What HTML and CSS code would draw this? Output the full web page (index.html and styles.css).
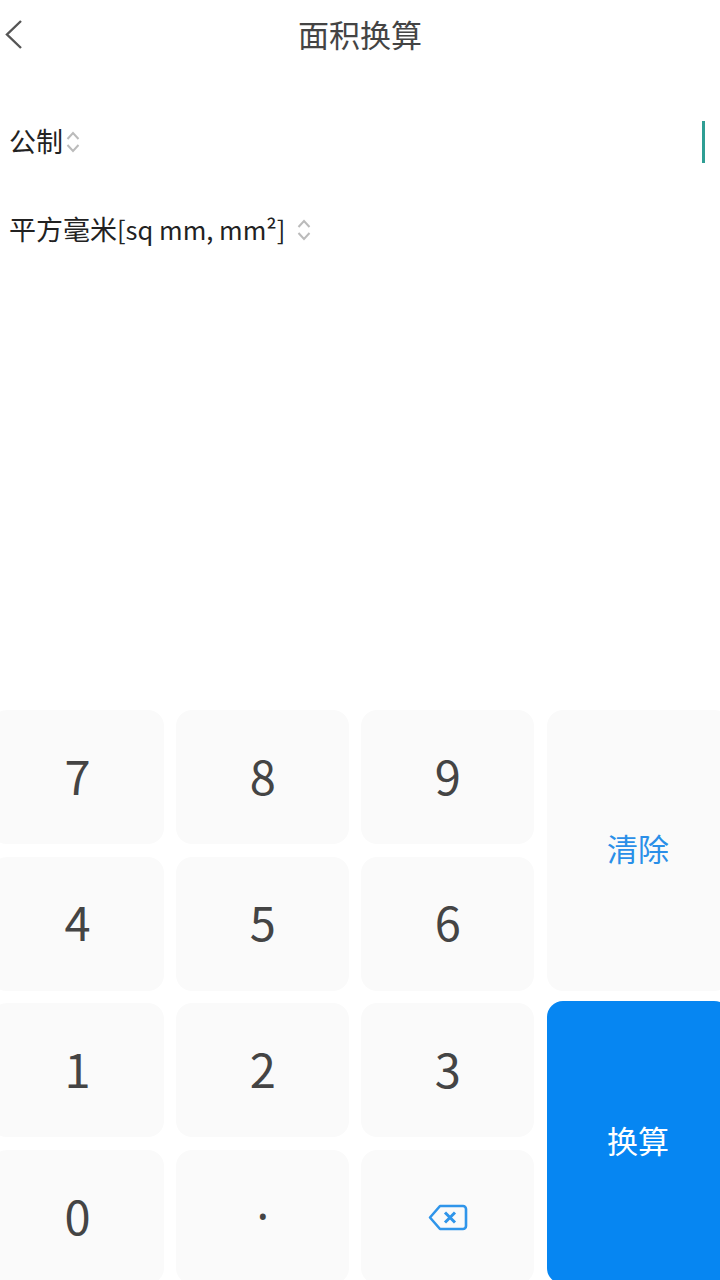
FILE: index.html
```html
<!DOCTYPE html>
<html lang="zh-CN">
<head>
  <meta charset="UTF-8">
  <title>面积换算</title>
  <link rel="stylesheet" href="styles.css">
</head>
<body>

<div class="page">
  <div class="topbar">
    <svg class="back" viewBox="0 0 20 32" width="20" height="32">
      <path d="M17 3 L3 16.5 L17 30" fill="none" stroke="#555" stroke-width="2.4"/>
    </svg>
    <div class="title">面积换算</div>
  </div>

  <div class="row row-system">
    <div class="picker">
      <span class="picker-text">公制</span>
      <svg class="updown updown-near" viewBox="0 0 16 24" width="16" height="24">
        <path d="M2.5 9 L8 3 L13.5 9 M2.5 15 L8 21 L13.5 15" fill="none" stroke="#bbb" stroke-width="2"/>
      </svg>
    </div>
    <div class="caret"></div>
  </div>

  <div class="row row-unit">
    <div class="picker">
      <span class="picker-text">平方毫米<span class="unit-code">[sq mm, mm²]</span></span>
      <svg class="updown updown-far" viewBox="0 0 16 24" width="16" height="24">
        <path d="M2.5 9 L8 3 L13.5 9 M2.5 15 L8 21 L13.5 15" fill="none" stroke="#bbb" stroke-width="2"/>
      </svg>
    </div>
  </div>

  <div class="keypad">
    <div class="key">7</div>
    <div class="key">8</div>
    <div class="key">9</div>
    <div class="key key-clear">清除</div>
    <div class="key">4</div>
    <div class="key">5</div>
    <div class="key">6</div>
    <div class="key">1</div>
    <div class="key">2</div>
    <div class="key">3</div>
    <div class="key key-convert">换算</div>
    <div class="key">0</div>
    <div class="key key-dot">·</div>
    <div class="key key-icon">
      <svg viewBox="0 0 40 28" width="40" height="28">
        <path d="M12 3 H35 a3 3 0 0 1 3 3 V23 a3 3 0 0 1 -3 3 H12 L2 14.5 Z" fill="none" stroke="#2f95ea" stroke-width="2.6" stroke-linejoin="round"/>
        <path d="M17 9.5 L27 19.5 M27 9.5 L17 19.5" fill="none" stroke="#2f95ea" stroke-width="3"/>
      </svg>
    </div>
  </div>
</div>

</body>
</html>
```

FILE: styles.css
```css
* {margin:0;padding:0;box-sizing:border-box;}
html, body {
  width: 720px;
  height: 1280px;
  overflow: hidden;
  background: #fff;
}
body {
  font-family: "Noto Sans CJK SC", "Noto Sans", sans-serif;
  color: #333;
}
.page {
  height: 1280px;
  display: flex;
  flex-direction: column;
}

.topbar {
  height: 70px;
  padding-bottom: 4px;
  display: flex;
  align-items: center;
  justify-content: center;
  position: relative;
}
.back {
  position: absolute;
  left: 4px;
  top: 18px;
}
.title {
  font-size: 31px;
  color: #444;
}

.row {
  display: flex;
  align-items: center;
  justify-content: space-between;
  padding: 0 15px 0 9px;
  font-size: 27px;
  color: #222;
}
.row-system {
  height: 44px;
  margin-top: 50px;
}
.row-unit {
  height: 44px;
  margin-top: 44px;
}
.picker {
  display: flex;
  align-items: center;
}
.picker-text {
  margin-bottom: 4px;
}
.unit-code {
  font-size: 25.5px;
}
.updown-near {
  margin-left: 2px;
}
.updown-far {
  margin-left: 11px;
}
.caret {
  width: 3px;
  height: 42px;
  background: #2f9e94;
}

.keypad {
  margin-top: auto;
  margin-left: -9px;
  margin-bottom: -4px;
  width: 739px;
  display: grid;
  grid-template-columns: 173px 173px 173px 183px;
  grid-template-rows: repeat(4, 134px);
  column-gap: 12.2px;
  row-gap: 12.67px;
}
.key {
  background: #fafafa;
  border-radius: 16px;
  padding-bottom: 6px;
  display: flex;
  align-items: center;
  justify-content: center;
  font-size: 47px;
  color: #444;
}
.key-clear {
  grid-column: 4;
  grid-row: 1 / span 2;
  font-size: 31px;
  color: #2a8fe8;
}
.key-convert {
  grid-column: 4;
  grid-row: 3 / span 2;
  margin-top: -2px;
  font-size: 31px;
  color: #fff;
  background: #0686f2;
}
.key-dot {
  padding-bottom: 2px;
  font-family: "Noto Sans", sans-serif;
}
.key-icon {
  padding-bottom: 0;
}
```
